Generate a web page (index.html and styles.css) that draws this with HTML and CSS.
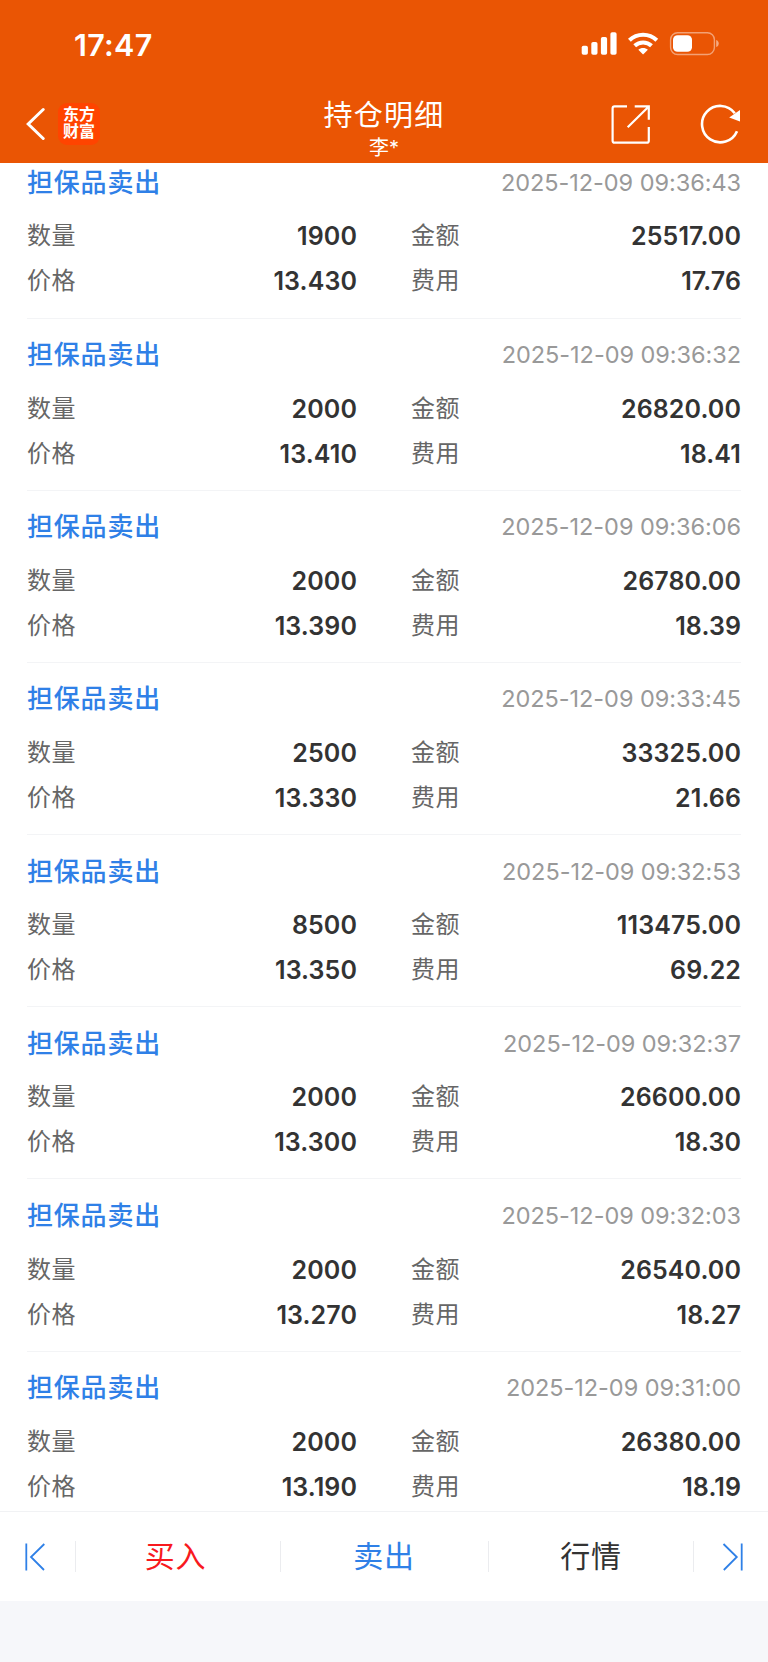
FILE: index.html
```html
<!DOCTYPE html>
<html lang="zh-CN">
<head>
    <meta charset="UTF-8">
    <meta name="viewport" content="width=device-width, initial-scale=1.0">
    <title>持仓明细</title>
    <link rel="stylesheet" href="styles.css">
</head>
<body>
    <header class="header">
        <div class="status-bar">
            <span class="clock">17:47</span>
            <svg class="status-icons" width="140" height="26" viewBox="580 31 140 26" fill="#fff">
                <rect x="581.7" y="45.8" width="6.2" height="9" rx="1.8"/>
                <rect x="591.3" y="42" width="6.2" height="12.8" rx="1.8"/>
                <rect x="600.9" y="37" width="6.2" height="17.8" rx="1.8"/>
                <rect x="610.4" y="32.3" width="6.2" height="22.5" rx="1.8"/>
                <g fill="none" stroke="#fff" stroke-width="4">
                    <path d="M629.4 40.3a19.6 19.6 0 0 1 27.4 0"/>
                    <path d="M634.7 45.8a12.2 12.2 0 0 1 16.8 0"/>
                </g>
                <path d="M643.1 54.6l-4.8-4.9c2.6-2.4 7-2.4 9.6 0z"/>
                <rect x="670.6" y="32.7" width="43.8" height="21.8" rx="7" fill="none" stroke="#fff" stroke-opacity=".45" stroke-width="1.4"/>
                <path d="M716.2 40c3.4 1 3.4 6 0 7z" fill-opacity=".5"/>
                <rect x="673" y="35.2" width="19" height="16.6" rx="4.6"/>
            </svg>
        </div>
        <div class="nav">
            <div class="nav-left">
                <svg width="20" height="34" viewBox="25 107 20 34" fill="none" stroke="#fff" stroke-width="3">
                    <path d="M43.2 109.5L28.2 124l15 14.5" stroke-linecap="round"/>
                </svg>
                <div class="logo"><span>东方</span><span>财富</span></div>
            </div>
            <div class="nav-title">
                <h1>持仓明细</h1>
                <span>李*</span>
            </div>
            <div class="nav-right">
                <svg width="40" height="40" viewBox="611 104 40 40" fill="none" stroke="#fff" stroke-width="2.2">
                    <path d="M627 106.4h-12.4a2 2 0 0 0-2 2v32.3a2 2 0 0 0 2 2h32.2a2 2 0 0 0 2-2V127"/>
                    <path d="M634.7 106.4h14.1v13.3M648.5 106.7l-20.8 20.6"/>
                </svg>
                <svg width="42" height="42" viewBox="700 103 42 42">
                    <path d="M737 131.2A18.2 18.2 0 1 1 734.8 113.2" fill="none" stroke="#fff" stroke-width="2.6"/>
                    <path d="M740 110v11.6l-10.8-4.2z" fill="#fff"/>
                </svg>
            </div>
        </div>
    </header>

    <main class="list">
        <section class="record">
            <div class="record-head"><h2>担保品卖出</h2><time>2025-12-09 09:36:43</time></div>
            <dl>
                <dt>数量</dt><dd>1900</dd><dt>金额</dt><dd>25517.00</dd>
                <dt>价格</dt><dd>13.430</dd><dt>费用</dt><dd>17.76</dd>
            </dl>
        </section>
        <section class="record">
            <div class="record-head"><h2>担保品卖出</h2><time>2025-12-09 09:36:32</time></div>
            <dl>
                <dt>数量</dt><dd>2000</dd><dt>金额</dt><dd>26820.00</dd>
                <dt>价格</dt><dd>13.410</dd><dt>费用</dt><dd>18.41</dd>
            </dl>
        </section>
        <section class="record">
            <div class="record-head"><h2>担保品卖出</h2><time>2025-12-09 09:36:06</time></div>
            <dl>
                <dt>数量</dt><dd>2000</dd><dt>金额</dt><dd>26780.00</dd>
                <dt>价格</dt><dd>13.390</dd><dt>费用</dt><dd>18.39</dd>
            </dl>
        </section>
        <section class="record">
            <div class="record-head"><h2>担保品卖出</h2><time>2025-12-09 09:33:45</time></div>
            <dl>
                <dt>数量</dt><dd>2500</dd><dt>金额</dt><dd>33325.00</dd>
                <dt>价格</dt><dd>13.330</dd><dt>费用</dt><dd>21.66</dd>
            </dl>
        </section>
        <section class="record">
            <div class="record-head"><h2>担保品卖出</h2><time>2025-12-09 09:32:53</time></div>
            <dl>
                <dt>数量</dt><dd>8500</dd><dt>金额</dt><dd>113475.00</dd>
                <dt>价格</dt><dd>13.350</dd><dt>费用</dt><dd>69.22</dd>
            </dl>
        </section>
        <section class="record">
            <div class="record-head"><h2>担保品卖出</h2><time>2025-12-09 09:32:37</time></div>
            <dl>
                <dt>数量</dt><dd>2000</dd><dt>金额</dt><dd>26600.00</dd>
                <dt>价格</dt><dd>13.300</dd><dt>费用</dt><dd>18.30</dd>
            </dl>
        </section>
        <section class="record">
            <div class="record-head"><h2>担保品卖出</h2><time>2025-12-09 09:32:03</time></div>
            <dl>
                <dt>数量</dt><dd>2000</dd><dt>金额</dt><dd>26540.00</dd>
                <dt>价格</dt><dd>13.270</dd><dt>费用</dt><dd>18.27</dd>
            </dl>
        </section>
        <section class="record">
            <div class="record-head"><h2>担保品卖出</h2><time>2025-12-09 09:31:00</time></div>
            <dl>
                <dt>数量</dt><dd>2000</dd><dt>金额</dt><dd>26380.00</dd>
                <dt>价格</dt><dd>13.190</dd><dt>费用</dt><dd>18.19</dd>
            </dl>
        </section>
    </main>

    <footer class="toolbar">
        <a class="prev">
            <svg width="22" height="30" viewBox="0 0 22 30" fill="none" stroke="#2f80e7" stroke-width="1.8">
                <path d="M2.3 1.5v27M20.3 2L7 15l13 13"/>
            </svg>
        </a>
        <a class="buy"><span>买入</span></a>
        <a class="sell"><span>卖出</span></a>
        <a class="quote"><span>行情</span></a>
        <a class="next">
            <svg width="22" height="30" viewBox="0 0 22 30" fill="none" stroke="#2f80e7" stroke-width="1.8">
                <path d="M19.7 1.5v27M1.5 2l13.3 13-13 13"/>
            </svg>
        </a>
    </footer>
</body>
</html>
```
FILE: styles.css
```css
* {
    box-sizing: border-box;
}
body {
    display: flex;
    flex-direction: column;
    height: 1662px;
    margin: 0;
    overflow: hidden;
    font-family: Inter, "Noto Sans CJK SC", sans-serif;
    background-color: #f6f7fa;
}
h1, h2, dl, dd {
    margin: 0;
}
svg {
    display: block;
}

/* Header */
.header {
    flex: none;
    height: 163px;
    color: white;
    background-color: #ea5504;
}
.status-bar {
    display: flex;
    justify-content: space-between;
    align-items: center;
    height: 88px;
    padding: 0 48px 0 74px;
}
.clock {
    font-size: 30.5px;
    font-weight: 600;
    letter-spacing: 0.3px;
}
.nav {
    display: grid;
    grid-template-columns: 1fr auto 1fr;
    height: 75px;
}
.nav-left {
    display: flex;
    align-items: center;
    gap: 13px;
    height: 71px;
    padding-left: 25px;
}
.logo {
    display: flex;
    flex-direction: column;
    justify-content: center;
    align-items: center;
    width: 42px;
    height: 42px;
    padding-bottom: 1px;
    border-radius: 9px;
    background-color: #ff4400;
    font-size: 16px;
    font-weight: 700;
    line-height: 17px;
}
.nav-title {
    display: flex;
    flex-direction: column;
    align-items: center;
    padding-top: 10px;
}
.nav-title h1 {
    font-size: 29px;
    font-weight: 400;
    line-height: 36px;
    letter-spacing: 1.2px;
}
.nav-title span {
    font-size: 20px;
    line-height: 29px;
}
.nav-right {
    display: flex;
    justify-content: flex-end;
    align-items: center;
    gap: 49px;
    height: 72px;
    padding-right: 26px;
}

/* Records */
.list {
    flex: 1;
    min-height: 0;
    overflow: hidden;
    padding: 0 27px;
    background-color: white;
}
.record {
    height: 172.2px;
    padding-top: 18px;
    border-bottom: 1px solid #f3f4f6;
}
/* the list is scrolled a little under the header */
.record:first-child {
    margin-top: -16.7px;
}
.record-head {
    display: flex;
    justify-content: space-between;
    align-items: center;
    height: 36px;
}
.record-head h2 {
    padding-top: 1px;
    color: #2f80e7;
    font-size: 26px;
    font-weight: 500;
    line-height: 36px;
    letter-spacing: 0.8px;
}
.record-head time {
    color: #999;
    font-size: 23.5px;
    letter-spacing: -0.05px;
}
.record dl {
    display: grid;
    grid-template-columns: 100px 230px 154px 1fr;
    grid-auto-rows: 45px;
    align-items: center;
    margin-top: 13.6px;
}
.record dt {
    color: #666;
    font-size: 24px;
    line-height: 36px;
    letter-spacing: 0.6px;
}
.record dt:nth-of-type(even) {
    padding-left: 54px;
}
.record dd {
    color: #333;
    font-size: 25px;
    font-weight: 600;
    letter-spacing: 0.1px;
    text-align: right;
}

/* Bottom toolbar */
.toolbar {
    display: grid;
    grid-template-columns: 75px 205px 208px 205px 1fr;
    flex: none;
    height: 90px;
    margin-bottom: 61px;
    border-top: 1px solid #f1f2f4;
    background-color: white;
}
.toolbar a {
    display: flex;
    justify-content: center;
    align-items: center;
    align-self: center;
    height: 31px;
    font-size: 30px;
    letter-spacing: 0.7px;
}
.toolbar a + a {
    border-left: 1px solid #ebecef;
}
.toolbar span {
    padding-bottom: 5px;
}
.toolbar .prev {
    justify-content: flex-start;
    padding-left: 24px;
}
.toolbar .next {
    justify-content: flex-end;
    padding-right: 24px;
}
.buy {
    padding-right: 5px;
    color: #f8191e;
}
.sell {
    padding-right: 1px;
    color: #2f80e7;
}
.quote {
    color: #333;
}
```
